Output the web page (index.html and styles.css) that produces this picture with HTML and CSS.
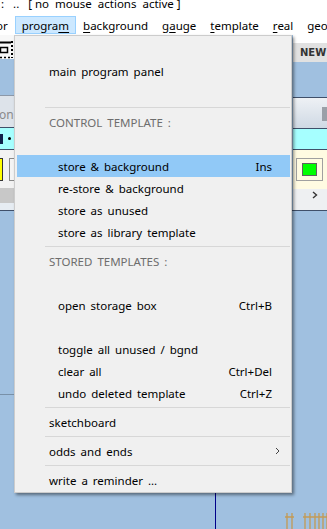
FILE: index.html
```html
<!DOCTYPE html>
<html lang="en">
<head>
  <meta charset="UTF-8" />
  <meta name="viewport" content="width=device-width, initial-scale=1.0"/>
  <title>program menu</title>
  <link rel="stylesheet" href="styles.css">
</head>
<body>

<div class="status">:   ..   [ no  mouse  actions  active ]</div>

<nav class="menubar">
  <span class="mb-item first">or</span>
  <span class="mb-item active">progra<u>m</u></span>
  <span class="mb-item"><u>b</u>ackground</span>
  <span class="mb-item">g<u>a</u>uge</span>
  <span class="mb-item"><u>t</u>emplate</span>
  <span class="mb-item"><u>r</u>eal</span>
  <span class="mb-item">geom</span>
</nav>

<main class="workspace">
  <div class="panels">
    <div class="side left">
      <div class="tools">
        <svg width="14" height="18" viewBox="0 0 14 18">
          <path d="M0 1.5H11" stroke="#000" stroke-width="2"/>
          <path d="M12 0V17" stroke="#000" stroke-width="2" stroke-dasharray="2 2"/>
          <path d="M0 16.5H11" stroke="#000" stroke-width="1.5" stroke-dasharray="2 2"/>
          <rect x="0.5" y="6.5" width="7" height="5" fill="none" stroke="#000" stroke-width="1.5"/>
        </svg>
      </div>
      <div class="gap-top"></div>
      <div class="box-grey"><span class="faint">on</span></div>
      <div class="box-cyan"><span class="mark-l"></span><span class="dot"></span></div>
      <div class="box-light">
        <span class="swatch-yellow"></span>
        <span class="btn-stub"></span>
      </div>
      <div class="band-grey"></div>
      <div class="band-pale"></div>
    </div>

    <div class="middle"></div>

    <div class="side right">
      <div class="tools-r"><span class="btn-new">NEW</span></div>
      <div class="gap-top-r"></div>
      <div class="box-grad"><span class="thumb"></span></div>
      <div class="box-cyan r"></div>
      <div class="box-yellow">
        <span class="swatch-frame"><span class="swatch-green"></span></span>
      </div>
      <div class="box-more">
        <svg width="6" height="8" viewBox="0 0 6 8"><path d="M1 1L4.5 4L1 7" fill="none" stroke="#333" stroke-width="1.4"/></svg>
      </div>
    </div>
  </div>

  <div class="canvas">
    <span class="hline"></span>
    <span class="vline"></span>
    <svg class="sleepers" width="44" height="16" viewBox="0 0 44 16">
      <g stroke="#c39a55" stroke-width="1.3" fill="none">
        <path d="M0 4H9M2 0V16M7 0V16"/>
        <path d="M18 4H36M20 0V16M25 0V16M30 0V16M34 0V16"/>
        <path d="M38 0V16M36 4H44M42 0V16"/>
      </g>
    </svg>
  </div>

  <div class="menu">
    <div class="row"></div>
    <div class="row"><span>main program panel</span></div>
    <div class="row"></div>
    <div class="sep"></div>
    <div class="row head"><span>CONTROL TEMPLATE :</span></div>
    <div class="row"></div>
    <div class="row sub hover"><span>store &amp; background</span><span class="key">Ins</span></div>
    <div class="row sub"><span>re-store &amp; background</span></div>
    <div class="row sub"><span>store as unused</span></div>
    <div class="row sub"><span>store as library template</span></div>
    <div class="sep"></div>
    <div class="row head"><span>STORED TEMPLATES :</span></div>
    <div class="row"></div>
    <div class="row sub"><span>open storage box</span><span class="key">Ctrl+B</span></div>
    <div class="row"></div>
    <div class="row sub"><span>toggle all unused / bgnd</span></div>
    <div class="row sub"><span>clear all</span><span class="key">Ctrl+Del</span></div>
    <div class="row sub"><span>undo deleted template</span><span class="key">Ctrl+Z</span></div>
    <div class="sep"></div>
    <div class="row"><span>sketchboard</span></div>
    <div class="sep"></div>
    <div class="row"><span>odds and ends</span>
      <svg class="arrow" width="5" height="8" viewBox="0 0 5 8"><path d="M1 1L4 4L1 7" fill="none" stroke="#444" stroke-width="1"/></svg>
    </div>
    <div class="sep"></div>
    <div class="row"><span>write a reminder ...</span></div>
  </div>
</main>

</body>
</html>
```

FILE: styles.css
```css
body {
  margin: 0;
  font-family: "Noto Sans", "Open Sans", sans-serif;
  font-size: 11.5px;
  color: #000;
  background: #a0c0e0;
  width: 327px;
  height: 529px;
  overflow: hidden;
}

.status {
  height: 14px;
  line-height: 8px;
  background: #fff;
  white-space: pre;
  padding-left: 1px;
  overflow: hidden;
}

.menubar {
  display: flex;
  height: 21px;
  background: #fff;
  white-space: nowrap;
  overflow: hidden;
}

.mb-item {
  padding: 0 6px;
  line-height: 18px;
  margin-top: 2px;
  border: 1px solid transparent;
  height: 16px;
}

.mb-item.first {
  margin-left: -11px;
}

.mb-item.active {
  background: #cce8ff;
  border-color: #99d1ff;
}

.mb-item u {
  text-underline-offset: 2px;
}

.workspace {
  position: relative;
  height: 494px;
}

.panels {
  display: flex;
  height: 175px;
  border-bottom: 1px solid #40506a;
}

.middle {
  flex: 1;
}

.side {
  display: flex;
  flex-direction: column;
}

.side.left {
  width: 14px;
}

.side.right {
  width: 34px;
}

/* left strip */
.tools {
  height: 24px;
  background: #f8f8f8;
  display: flex;
  align-items: flex-end;
}

.gap-top {
  height: 36px;
}

.box-grey {
  height: 32px;
  border-top: 1px solid #8c98a8;
  background: #dde3ea;
  box-sizing: border-box;
  display: flex;
  align-items: flex-end;
  padding-bottom: 6px;
}

.faint {
  color: #8a8a8a;
  font-size: 12px;
  line-height: 12px;
  margin-left: -1px;
}

.box-cyan {
  height: 21px;
  background: #a6ffff;
  border-top: 1px solid #40506a;
  border-bottom: 1px solid #40506a;
  display: flex;
  align-items: center;
  gap: 5px;
}

.mark-l {
  width: 3px;
  height: 10px;
  background: #10204a;
}

.dot {
  width: 3px;
  height: 3px;
  border-radius: 50%;
  background: #000;
}

.box-light {
  height: 38px;
  background: #f2f2f2;
  display: flex;
  align-items: center;
  gap: 6px;
}

.swatch-yellow {
  width: 3px;
  height: 21px;
  background: #ffff00;
  border: 1px solid #333;
  border-left: none;
}

.btn-stub {
  width: 5px;
  height: 21px;
  border: 1px solid #888;
  border-right: none;
  background: #f4f4f4;
}

.band-grey {
  height: 15px;
  background: #c8c8c8;
}

.band-pale {
  flex: 1;
  background: #e6ecf2;
}

/* right strip */
.tools-r {
  height: 27px;
  background: #fff;
  display: flex;
  align-items: flex-end;
}

.btn-new {
  display: block;
  width: 100%;
  height: 19px;
  background: #e1e1e1;
  font-family: "DejaVu Sans", sans-serif;
  font-weight: bold;
  font-size: 10px;
  line-height: 19px;
  color: #333;
  padding-left: 7px;
}

.gap-top-r {
  height: 35px;
}

.box-grad {
  height: 30px;
  border-top: 1px solid #40506a;
  background: linear-gradient(#eef1f5, #cfd9e4);
  display: flex;
  justify-content: flex-end;
  align-items: flex-start;
}

.thumb {
  width: 5px;
  height: 14px;
  margin-top: 9px;
  background: #9aa0a8;
}

.box-cyan.r {
  height: 20px;
}

.box-yellow {
  height: 39px;
  background: #fffbe2;
  display: flex;
  align-items: center;
  padding-left: 3px;
}

.swatch-frame {
  width: 25px;
  height: 21px;
  border: 1px solid #a0a0a0;
  display: flex;
  align-items: center;
  justify-content: center;
}

.swatch-green {
  width: 13px;
  height: 11px;
  background: #00ff00;
  border: 1px solid #606060;
}

.box-more {
  flex: 1;
  background: #eef0f2;
  display: flex;
  justify-content: center;
  padding-top: 2px;
  padding-left: 9px;
}

/* drawing canvas */
.canvas {
  position: relative;
  height: 318px;
}

.hline {
  position: absolute;
  left: 0;
  top: 183px;
  width: 14px;
  height: 1px;
  background: #7890a8;
}

.vline {
  position: absolute;
  left: 215px;
  top: 0;
  bottom: 0;
  width: 1px;
  background: #00008a;
}

.sleepers {
  position: absolute;
  left: 285px;
  bottom: 0;
}

/* dropdown */
.menu {
  position: absolute;
  left: 14px;
  top: 0;
  width: 276px;
  padding: 2px 0 1px;
  background: #f0f0f0;
  border: 1px solid #cccccc;
  box-shadow: 2px 2px 3px rgba(0, 0, 0, 0.45);
}

.row {
  display: flex;
  align-items: center;
  height: 22px;
  margin: 0 1px 0 2px;
  padding: 0 18px 0 32px;
  word-spacing: 2px;
  white-space: nowrap;
}

.row.sub {
  padding-left: 41px;
}

.row.head {
  color: #6d6d6d;
}

.row.hover {
  background: #91c9f7;
}

.key {
  margin-left: auto;
}

.arrow {
  margin-left: auto;
  margin-right: -8px;
}

.sep {
  height: 7px;
  margin: 0 1px 0 30px;
  display: flex;
  align-items: center;
}

.sep::before {
  content: "";
  flex: 1;
  height: 1px;
  background: #d7d7d7;
}
```
